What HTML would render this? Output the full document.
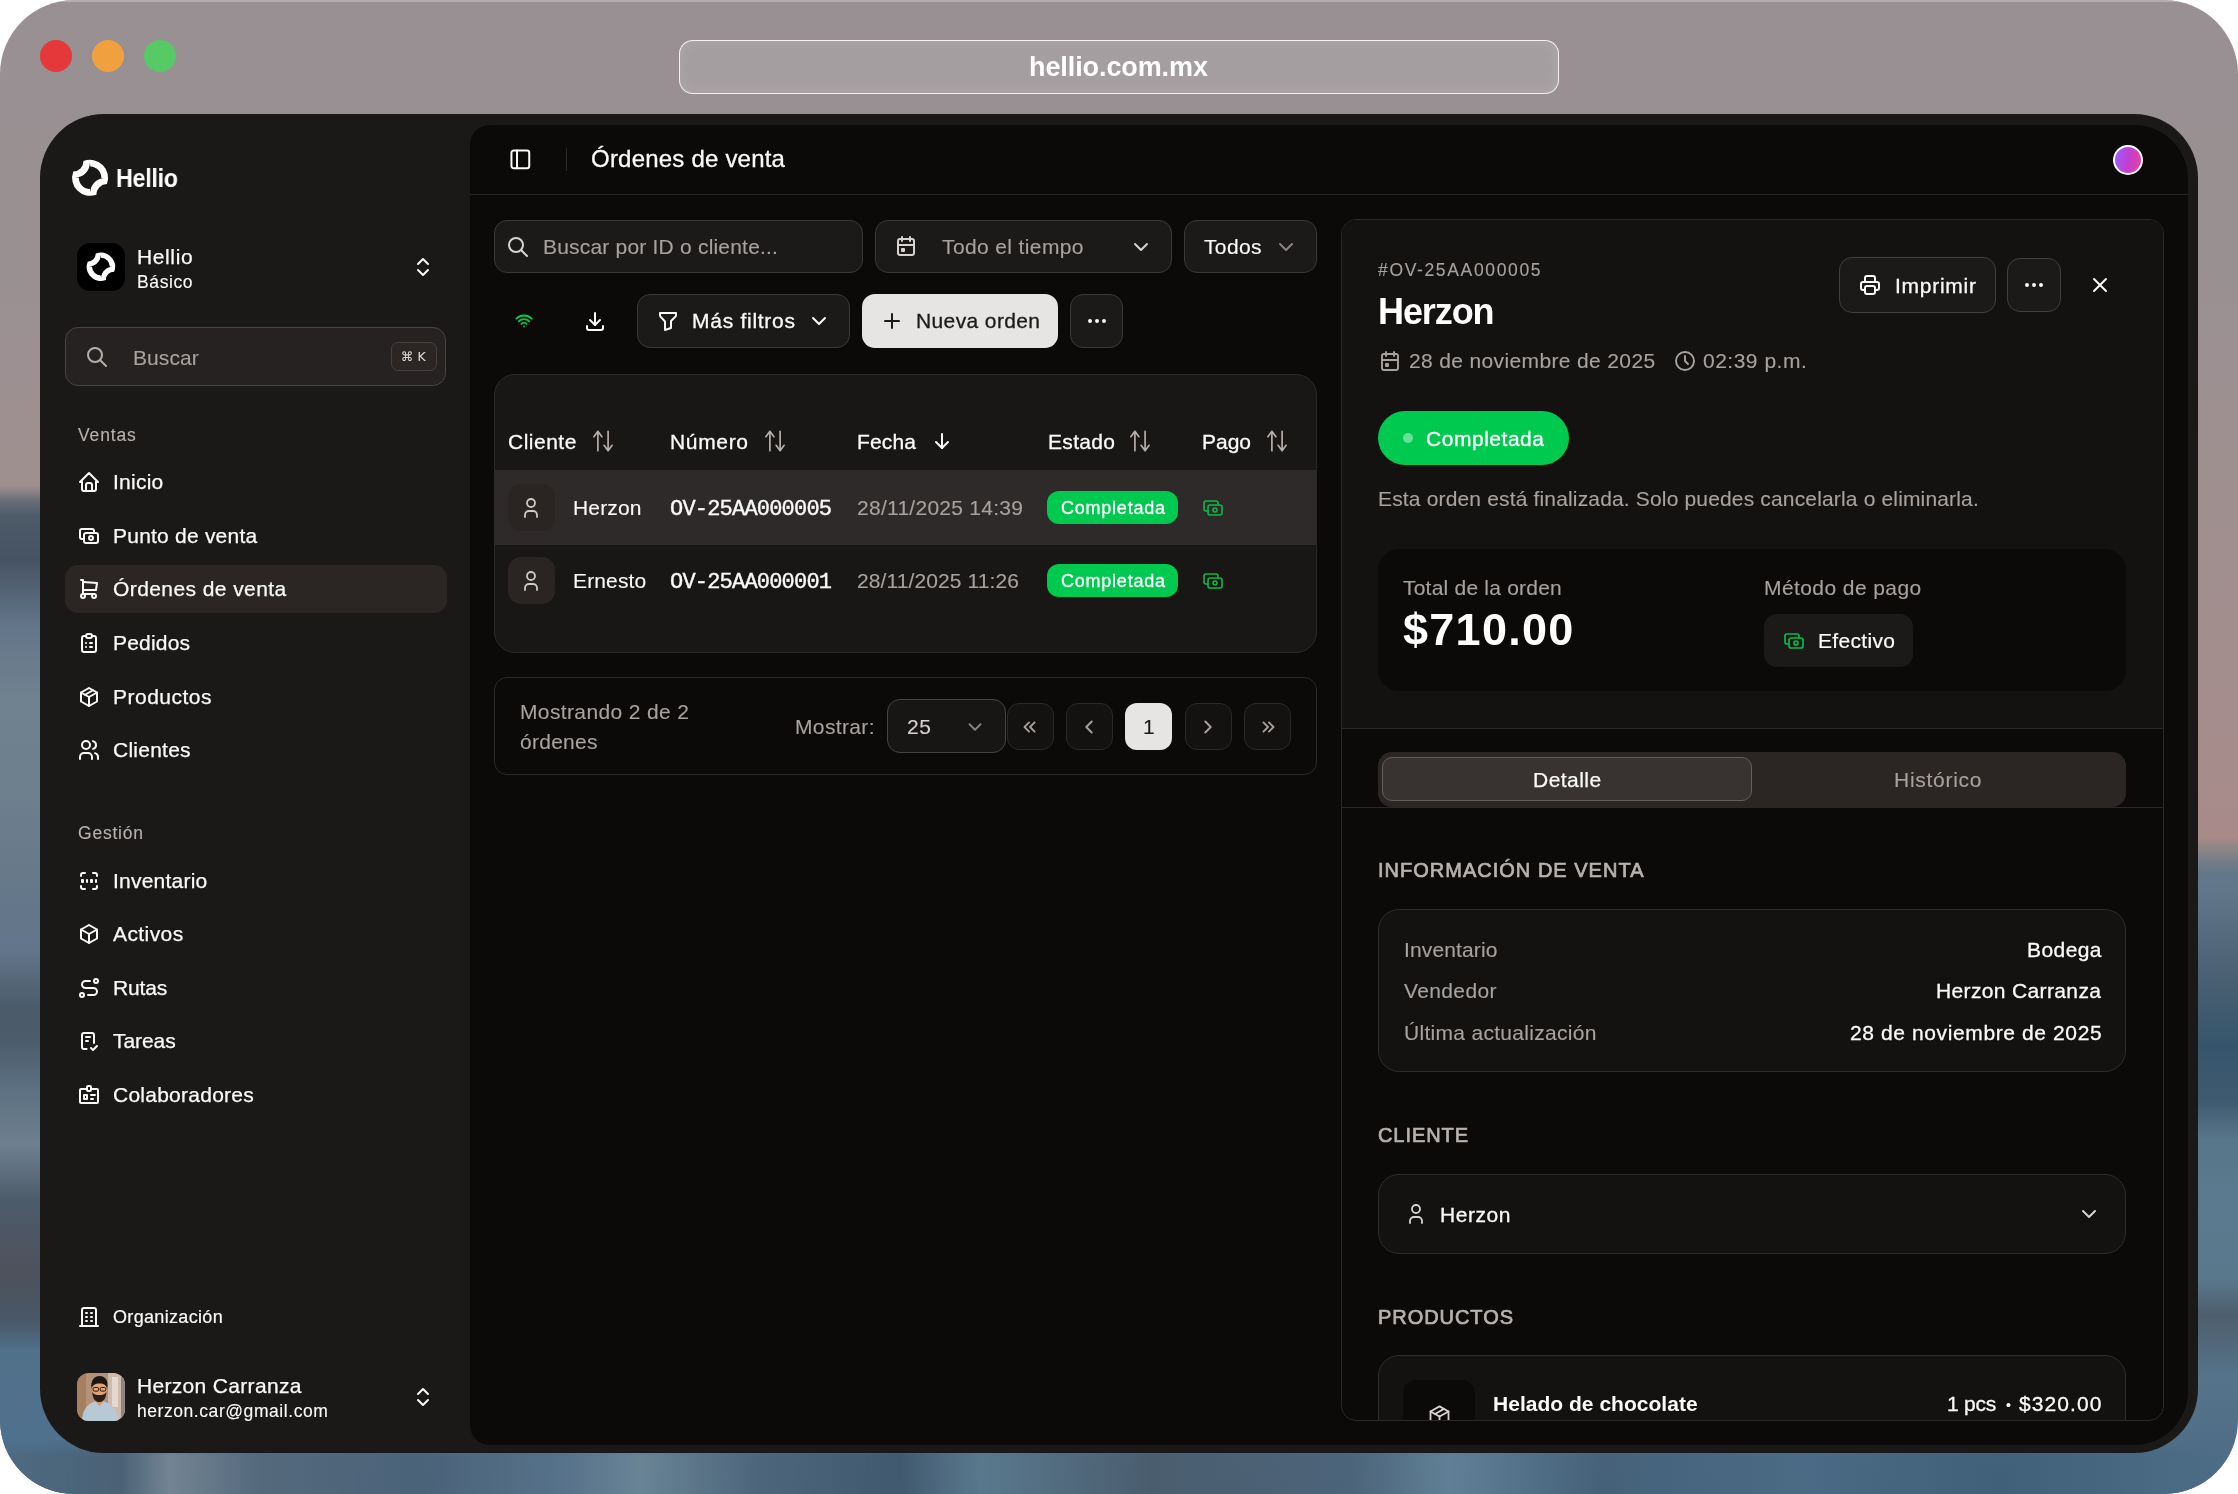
<!DOCTYPE html>
<html lang="es"><head><meta charset="utf-8"><title>Hellio - Órdenes de venta</title><style>
*{box-sizing:border-box;margin:0;padding:0}
html,body{width:2238px;height:1494px;background:#fff;overflow:hidden}
body{font-family:"Liberation Sans",sans-serif;position:relative}
.b{position:absolute;display:block}
.t{position:absolute;white-space:nowrap;will-change:transform}
</style></head><body>
<div class="b" style="left:0;top:0;width:2238px;height:1494px;border-radius:74px;overflow:hidden;background:linear-gradient(180deg,#989092 0px,#9a9092 300px,#a08f8f 520px,#a68c8b 780px,#a88a88 838px,#8a8486 850px,#64788a 872px,#5f7587 900px,#4b6073 975px,#36556c 1045px,#3f5a70 1100px,#587689 1140px,#5b7a8f 1200px,#5a788c 1280px,#4e5e6c 1315px,#56738a 1375px,#4a6b84 1494px)">
<div class="b" style="left:0;top:0;width:1100px;height:1494px;background:linear-gradient(180deg,rgba(0,0,0,0) 486px,#6b6f78 500px,#4d5b69 516px,#465362 560px,#63758a 625px,#70828f 700px,#6d7f8d 800px,#66798a 880px,#62758a 950px,#4a5a69 1010px,#4c5c6b 1040px,#5b6f80 1085px,#6e8090 1145px,#4d5b6a 1200px,#4e525c 1270px,#495766 1320px,#51708a 1350px,#4f7290 1494px);-webkit-mask-image:linear-gradient(90deg,#000 0,#000 60px,rgba(0,0,0,0) 1100px);mask-image:linear-gradient(90deg,#000 0,#000 60px,rgba(0,0,0,0) 1100px)"></div>
<div class="b" style="left:0;top:1440px;width:2238px;height:54px;background:linear-gradient(90deg,#4e6a80 0,#4a5f72 120px,#7a8896 170px,#55687a 260px,#4a6176 420px,#58728a 560px,#6f8899 640px,#4d6479 760px,#3f566b 900px,#5d7b8f 980px,#4a5b6c 1150px,#4c6378 1350px,#65849a 1450px,#456078 1600px,#4a6a85 1800px,#3f5e78 2000px,#4f6f88 2238px);opacity:.85;-webkit-mask-image:linear-gradient(180deg,rgba(0,0,0,0) 0,#000 16px);mask-image:linear-gradient(180deg,rgba(0,0,0,0) 0,#000 16px)"></div>
<div class="b" style="left:0;top:0;width:2238px;height:2px;background:rgba(255,255,255,.25)"></div>
</div>
<div class="b" style="left:40px;top:40px;width:32px;height:32px;background:#e5383b;border-radius:16px;"></div>
<div class="b" style="left:92px;top:40px;width:32px;height:32px;background:#f0a03f;border-radius:16px;"></div>
<div class="b" style="left:144px;top:40px;width:32px;height:32px;background:#57c965;border-radius:16px;"></div>
<div class="b" style="left:679px;top:40px;width:880px;height:54px;background:rgba(255,255,255,.13);border-radius:14px;border:1.5px solid rgba(255,255,255,.85);box-shadow:inset 0 0 12px rgba(255,255,255,.12)"></div>
<div class="t" style="font-size:27px;line-height:38px;top:47.5px;color:#fff;left:1029.0px;letter-spacing:-0.09px;font-weight:700;">hellio.com.mx</div>
<div class="b" style="left:40px;top:114px;width:2158px;height:1339px;background:#1b1918;border-radius:64px;"></div>
<div class="b" style="left:470px;top:124.5px;width:1718px;height:1320px;background:#0c0a09;border-radius:20px 54px 54px 20px"></div>
<svg class="b" style="left:66.0px;top:154.0px" width="48" height="48" viewBox="0 0 48 48"><path fill="#fff" fill-rule="evenodd" d="M17.49 7.11A18 18 0 0 1 40.98 30.11A10.4 10.4 0 0 0 30.44 40.7A18 18 0 0 1 7.27 17.48A10.4 10.4 0 0 0 17.49 7.11ZM23.94 8.35L24.4 12.4A11.3 11.3 0 0 1 35.34 23.94L39.5 23.94A15 15 0 0 0 24.25 38.55L23.94 35A11.3 11.3 0 0 1 12.85 23.78L8.67 23.6A15 15 0 0 0 23.94 8.35Z"/></svg>
<div class="t" style="font-size:26.5px;line-height:37px;top:159.5px;color:#fff;left:116.0px;letter-spacing:-0.34px;font-weight:700;transform:scaleX(0.88);transform-origin:0 50%;">Hellio</div>
<div class="b" style="left:77px;top:243px;width:48px;height:48px;background:#000;border-radius:13px;"></div>
<svg class="b" style="left:82.2px;top:248.2px" width="37.7" height="37.7" viewBox="0 0 48 48"><path fill="#fff" fill-rule="evenodd" d="M17.49 7.11A18 18 0 0 1 40.98 30.11A10.4 10.4 0 0 0 30.44 40.7A18 18 0 0 1 7.27 17.48A10.4 10.4 0 0 0 17.49 7.11ZM23.94 8.35L24.4 12.4A11.3 11.3 0 0 1 35.34 23.94L39.5 23.94A15 15 0 0 0 24.25 38.55L23.94 35A11.3 11.3 0 0 1 12.85 23.78L8.67 23.6A15 15 0 0 0 23.94 8.35Z"/></svg>
<div class="t" style="font-size:21px;line-height:29px;top:241.5px;color:#fafaf9;left:137.0px;letter-spacing:0.62px;-webkit-text-stroke:0.25px #fafaf9;">Hellio</div>
<div class="t" style="font-size:17.5px;line-height:24px;top:269.5px;color:#fafaf9;left:137.0px;letter-spacing:0.61px;-webkit-text-stroke:0.12px #fafaf9;">Básico</div>
<svg class="b" style="left:410.5px;top:255.0px" width="24" height="24" viewBox="0 0 24 24" fill="none" stroke="#fafaf9" stroke-width="2" stroke-linecap="round" stroke-linejoin="round"><path d="M7 15l5 5l5 -5"/><path d="M7 9l5 -5l5 5"/></svg>
<div class="b" style="left:65px;top:327px;width:381px;height:59px;background:#252221;border:1px solid #494442;border-radius:13px;"></div>
<svg class="b" style="left:84.5px;top:345.0px" width="24" height="24" viewBox="0 0 24 24" fill="none" stroke="#b5afab" stroke-width="2" stroke-linecap="round" stroke-linejoin="round"><path d="M10 10m-7 0a7 7 0 1 0 14 0a7 7 0 1 0 -14 0"/><path d="M21 21l-6 -6"/></svg>
<div class="t" style="font-size:21px;line-height:29px;top:342.5px;color:#a8a29e;left:132.8px;letter-spacing:0.09px;-webkit-text-stroke:0.12px #a8a29e;">Buscar</div>
<div class="b" style="left:391px;top:342px;width:46px;height:29px;background:#2b2624;border:1px solid #45403d;border-radius:7px;"></div>
<div class="t" style="font-size:12.5px;line-height:18px;top:347.5px;color:#d6d3d1;left:401.2px;-webkit-text-stroke:0.12px #d6d3d1;font-family:'DejaVu Sans','Liberation Sans',sans-serif;">⌘ K</div>
<div class="t" style="font-size:17.5px;line-height:24px;top:422.5px;color:#b8b2ae;left:78.0px;letter-spacing:0.86px;-webkit-text-stroke:0.12px #b8b2ae;">Ventas</div>
<div class="b" style="left:65px;top:565px;width:381.5px;height:48px;background:#2b2624;border-radius:13px;"></div>
<svg class="b" style="left:77.0px;top:469.5px" width="24" height="24" viewBox="0 0 24 24" fill="none" stroke="#fafaf9" stroke-width="2" stroke-linecap="round" stroke-linejoin="round"><path d="M5 12l-2 0l9 -9l9 9l-2 0"/><path d="M5 12v7a2 2 0 0 0 2 2h10a2 2 0 0 0 2 -2v-7"/><path d="M9 21v-6a2 2 0 0 1 2 -2h2a2 2 0 0 1 2 2v6"/></svg>
<div class="t" style="font-size:21px;line-height:29px;top:466.5px;color:#fafaf9;left:113.0px;letter-spacing:0.24px;-webkit-text-stroke:0.25px #fafaf9;">Inicio</div>
<svg class="b" style="left:77.0px;top:523.5px" width="24" height="24" viewBox="0 0 24 24" fill="none" stroke="#fafaf9" stroke-width="2" stroke-linecap="round" stroke-linejoin="round"><path d="M7 9m0 2a2 2 0 0 1 2 -2h10a2 2 0 0 1 2 2v6a2 2 0 0 1 -2 2h-10a2 2 0 0 1 -2 -2z"/><path d="M14 14m-2 0a2 2 0 1 0 4 0a2 2 0 1 0 -4 0"/><path d="M17 9v-2a2 2 0 0 0 -2 -2h-10a2 2 0 0 0 -2 2v6a2 2 0 0 0 2 2h2"/></svg>
<div class="t" style="font-size:21px;line-height:29px;top:520.5px;color:#fafaf9;left:113.0px;letter-spacing:0.22px;-webkit-text-stroke:0.25px #fafaf9;">Punto de venta</div>
<svg class="b" style="left:77.0px;top:577.1px" width="24" height="24" viewBox="0 0 24 24" fill="none" stroke="#fafaf9" stroke-width="2" stroke-linecap="round" stroke-linejoin="round"><path d="M6 19m-2 0a2 2 0 1 0 4 0a2 2 0 1 0 -4 0"/><path d="M17 19m-2 0a2 2 0 1 0 4 0a2 2 0 1 0 -4 0"/><path d="M17 17h-11v-14h-2"/><path d="M6 5l14 1l-1 7h-13"/></svg>
<div class="t" style="font-size:21px;line-height:29px;top:574.1px;color:#fafaf9;left:113.0px;letter-spacing:0.42px;-webkit-text-stroke:0.25px #fafaf9;">Órdenes de venta</div>
<svg class="b" style="left:77.0px;top:630.5px" width="24" height="24" viewBox="0 0 24 24" fill="none" stroke="#fafaf9" stroke-width="2" stroke-linecap="round" stroke-linejoin="round"><path d="M9 5h-2a2 2 0 0 0 -2 2v12a2 2 0 0 0 2 2h10a2 2 0 0 0 2 -2v-12a2 2 0 0 0 -2 -2h-2"/><path d="M9 3m0 2a2 2 0 0 1 2 -2h2a2 2 0 0 1 2 2v0a2 2 0 0 1 -2 2h-2a2 2 0 0 1 -2 -2z"/><path d="M9 12l.01 0"/><path d="M13 12l2 0"/><path d="M9 16l.01 0"/><path d="M13 16l2 0"/></svg>
<div class="t" style="font-size:21px;line-height:29px;top:627.5px;color:#fafaf9;left:113.0px;letter-spacing:0.19px;-webkit-text-stroke:0.25px #fafaf9;">Pedidos</div>
<svg class="b" style="left:77.0px;top:684.5px" width="24" height="24" viewBox="0 0 24 24" fill="none" stroke="#fafaf9" stroke-width="2" stroke-linecap="round" stroke-linejoin="round"><path d="M12 3l8 4.5l0 9l-8 4.5l-8 -4.5l0 -9l8 -4.5"/><path d="M12 12l8 -4.5"/><path d="M12 12l0 9"/><path d="M12 12l-8 -4.5"/><path d="M16 5.25l-8 4.5"/></svg>
<div class="t" style="font-size:21px;line-height:29px;top:681.5px;color:#fafaf9;left:113.0px;letter-spacing:0.49px;-webkit-text-stroke:0.25px #fafaf9;">Productos</div>
<svg class="b" style="left:77.0px;top:738.0px" width="24" height="24" viewBox="0 0 24 24" fill="none" stroke="#fafaf9" stroke-width="2" stroke-linecap="round" stroke-linejoin="round"><path d="M9 7m-4 0a4 4 0 1 0 8 0a4 4 0 1 0 -8 0"/><path d="M3 21v-2a4 4 0 0 1 4 -4h4a4 4 0 0 1 4 4v2"/><path d="M16 3.13a4 4 0 0 1 0 7.75"/><path d="M21 21v-2a4 4 0 0 0 -3 -3.85"/></svg>
<div class="t" style="font-size:21px;line-height:29px;top:735.0px;color:#fafaf9;left:113.0px;letter-spacing:0.25px;-webkit-text-stroke:0.25px #fafaf9;">Clientes</div>
<div class="t" style="font-size:17.5px;line-height:24px;top:821.3px;color:#b8b2ae;left:78.0px;letter-spacing:0.78px;-webkit-text-stroke:0.12px #b8b2ae;">Gestión</div>
<svg class="b" style="left:77.0px;top:869.0px" width="24" height="24" viewBox="0 0 24 24" fill="none" stroke="#fafaf9" stroke-width="2" stroke-linecap="round" stroke-linejoin="round"><path d="M4 7v-1a2 2 0 0 1 2 -2h2"/><path d="M4 17v1a2 2 0 0 0 2 2h2"/><path d="M16 4h2a2 2 0 0 1 2 2v1"/><path d="M16 20h2a2 2 0 0 0 2 -2v-1"/><path d="M5 11h1v2h-1z"/><path d="M10 11l0 2"/><path d="M14 11h1v2h-1z"/><path d="M19 11l0 2"/></svg>
<div class="t" style="font-size:21px;line-height:29px;top:865.5px;color:#fafaf9;left:113.0px;letter-spacing:0.23px;-webkit-text-stroke:0.25px #fafaf9;">Inventario</div>
<svg class="b" style="left:77.0px;top:922.3px" width="24" height="24" viewBox="0 0 24 24" fill="none" stroke="#fafaf9" stroke-width="2" stroke-linecap="round" stroke-linejoin="round"><path d="M12 3l8 4.5l0 9l-8 4.5l-8 -4.5l0 -9l8 -4.5"/><path d="M12 12l8 -4.5"/><path d="M12 12l0 9"/><path d="M12 12l-8 -4.5"/></svg>
<div class="t" style="font-size:21px;line-height:29px;top:918.8px;color:#fafaf9;left:113.0px;letter-spacing:0.42px;-webkit-text-stroke:0.25px #fafaf9;">Activos</div>
<svg class="b" style="left:77.0px;top:976.0px" width="24" height="24" viewBox="0 0 24 24" fill="none" stroke="#fafaf9" stroke-width="2" stroke-linecap="round" stroke-linejoin="round"><path d="M3 19a2 2 0 1 0 4 0a2 2 0 0 0 -4 0"/><path d="M19 7a2 2 0 1 0 0 -4a2 2 0 0 0 0 4z"/><path d="M11 19h5.5a3.5 3.5 0 0 0 0 -7h-8a3.5 3.5 0 0 1 0 -7h4.5"/></svg>
<div class="t" style="font-size:21px;line-height:29px;top:972.5px;color:#fafaf9;left:113.0px;letter-spacing:-0.16px;-webkit-text-stroke:0.25px #fafaf9;">Rutas</div>
<svg class="b" style="left:77.0px;top:1029.4px" width="24" height="24" viewBox="0 0 24 24" fill="none" stroke="#fafaf9" stroke-width="2" stroke-linecap="round" stroke-linejoin="round"><path d="M9.615 20h-2.615a2 2 0 0 1 -2 -2v-12a2 2 0 0 1 2 -2h8a2 2 0 0 1 2 2v8"/><path d="M14 19l2 2l4 -4"/><path d="M9 8h4"/><path d="M9 12h2"/></svg>
<div class="t" style="font-size:21px;line-height:29px;top:1025.9px;color:#fafaf9;left:113.0px;letter-spacing:-0.07px;-webkit-text-stroke:0.25px #fafaf9;">Tareas</div>
<svg class="b" style="left:77.0px;top:1083.0px" width="24" height="24" viewBox="0 0 24 24" fill="none" stroke="#fafaf9" stroke-width="2" stroke-linecap="round" stroke-linejoin="round"><path d="M7 12h3v4h-3z"/><path d="M10 6h-6a1 1 0 0 0 -1 1v12a1 1 0 0 0 1 1h16a1 1 0 0 0 1 -1v-12a1 1 0 0 0 -1 -1h-6"/><path d="M10 3m0 1a1 1 0 0 1 1 -1h2a1 1 0 0 1 1 1v3a1 1 0 0 1 -1 1h-2a1 1 0 0 1 -1 -1z"/><path d="M14 16h2"/><path d="M14 12h4"/></svg>
<div class="t" style="font-size:21px;line-height:29px;top:1079.5px;color:#fafaf9;left:113.0px;letter-spacing:0.25px;-webkit-text-stroke:0.25px #fafaf9;">Colaboradores</div>
<svg class="b" style="left:77.0px;top:1305.0px" width="24" height="24" viewBox="0 0 24 24" fill="none" stroke="#fafaf9" stroke-width="2" stroke-linecap="round" stroke-linejoin="round"><path d="M3 21l18 0"/><path d="M9 8l1 0"/><path d="M9 12l1 0"/><path d="M9 16l1 0"/><path d="M14 8l1 0"/><path d="M14 12l1 0"/><path d="M14 16l1 0"/><path d="M5 21v-16a2 2 0 0 1 2 -2h10a2 2 0 0 1 2 2v16"/></svg>
<div class="t" style="font-size:18px;line-height:25px;top:1304.5px;color:#fafaf9;left:113.3px;letter-spacing:0.33px;-webkit-text-stroke:0.2px #fafaf9;">Organización</div>
<svg class="b" style="left:77px;top:1373px;border-radius:12px" width="48" height="48" viewBox="0 0 48 48"><rect width="48" height="48" fill="#b4927a"/><rect x="0" y="0" width="9" height="48" fill="#a5815f"/><rect x="31" y="0" width="17" height="48" fill="#cdbcae"/><rect x="35" y="4" width="6" height="30" fill="#e4d9cf"/><rect x="44" y="0" width="4" height="48" fill="#8f8480"/><path d="M5 48c0-12 7-20 17.500-20s18.500 8 18.500 20z" fill="#b7c9d6"/><path d="M18 28l4.500 5l4.500-5z" fill="#d9966a"/><ellipse cx="22.300" cy="16.500" rx="7.300" ry="9.500" fill="#e3a26f"/><path d="M14.600 15.500c-1.500-8 3-12.500 8-12.500s9.500 4 7.500 12.500c-1-3.500-3-5-7.500-5s-7 1.500-8 5z" fill="#1e1815"/><path d="M15.200 19c.5 7.500 3.500 10 7.100 10s6.600-2.500 7.100-10c-1.500 2.500-4 3-7.100 3s-5.600-.5-7.100-3z" fill="#2a1f1a"/><rect x="16" y="14.500" width="5.600" height="3.600" rx="1.300" fill="none" stroke="#1e1815" stroke-width="1"/><rect x="23.200" y="14.500" width="5.600" height="3.600" rx="1.300" fill="none" stroke="#1e1815" stroke-width="1"/></svg>
<div class="t" style="font-size:21px;line-height:29px;top:1371.1px;color:#fafaf9;left:137.2px;letter-spacing:0.32px;-webkit-text-stroke:0.25px #fafaf9;">Herzon Carranza</div>
<div class="t" style="font-size:17.5px;line-height:24px;top:1398.5px;color:#fafaf9;left:137.2px;letter-spacing:0.56px;-webkit-text-stroke:0.12px #fafaf9;">herzon.car@gmail.com</div>
<svg class="b" style="left:410.5px;top:1385.0px" width="24" height="24" viewBox="0 0 24 24" fill="none" stroke="#fafaf9" stroke-width="2" stroke-linecap="round" stroke-linejoin="round"><path d="M7 15l5 5l5 -5"/><path d="M7 9l5 -5l5 5"/></svg>
<div class="b" style="left:470px;top:194px;width:1718px;height:1px;background:#262321;"></div>
<svg class="b" style="left:507.2px;top:145.8px" width="26.7" height="26.7" viewBox="0 0 24 24" fill="none" stroke="#fafaf9" stroke-width="1.8" stroke-linecap="round" stroke-linejoin="round"><path d="M4 4m0 2a2 2 0 0 1 2 -2h12a2 2 0 0 1 2 2v12a2 2 0 0 1 -2 2h-12a2 2 0 0 1 -2 -2z"/><path d="M9 4l0 16"/></svg>
<div class="b" style="left:565.5px;top:148px;width:1px;height:23px;background:#2c2927;"></div>
<div class="t" style="font-size:24px;line-height:34px;top:142.0px;color:#fafaf9;left:591.0px;letter-spacing:0.21px;-webkit-text-stroke:0.3px #fafaf9;">Órdenes de venta</div>
<div class="b" style="left:2112.5px;top:144.5px;width:30px;height:30px;border-radius:15px;background:linear-gradient(100deg,#a855f7 15%,#c13fd0 50%,#ec3f9a 100%);border:2px solid #fff"></div>
<div class="b" style="left:494px;top:220px;width:369px;height:53px;background:#1c1a19;border:1px solid #3d3836;border-radius:13px;"></div>
<svg class="b" style="left:506.0px;top:234.5px" width="24" height="24" viewBox="0 0 24 24" fill="none" stroke="#d6d3d1" stroke-width="2" stroke-linecap="round" stroke-linejoin="round"><path d="M10 10m-7 0a7 7 0 1 0 14 0a7 7 0 1 0 -14 0"/><path d="M21 21l-6 -6"/></svg>
<div class="t" style="font-size:21px;line-height:29px;top:232.0px;color:#a8a29e;left:543.0px;letter-spacing:0.20px;-webkit-text-stroke:0.12px #a8a29e;">Buscar por ID o cliente...</div>
<div class="b" style="left:875px;top:220px;width:297px;height:53px;background:#1c1a19;border:1px solid #3d3836;border-radius:13px;"></div>
<svg class="b" style="left:894.0px;top:234.0px" width="24" height="24" viewBox="0 0 24 24" fill="none" stroke="#d6d3d1" stroke-width="2" stroke-linecap="round" stroke-linejoin="round"><path d="M4 5m0 2a2 2 0 0 1 2 -2h12a2 2 0 0 1 2 2v12a2 2 0 0 1 -2 2h-12a2 2 0 0 1 -2 -2z"/><path d="M16 3l0 4"/><path d="M8 3l0 4"/><path d="M4 11l16 0"/><path d="M8 15h2v2h-2z"/></svg>
<div class="t" style="font-size:21px;line-height:29px;top:231.5px;color:#a8a29e;left:942.0px;letter-spacing:0.38px;-webkit-text-stroke:0.12px #a8a29e;">Todo el tiempo</div>
<svg class="b" style="left:1129.0px;top:234.5px" width="24" height="24" viewBox="0 0 24 24" fill="none" stroke="#d6d3d1" stroke-width="2" stroke-linecap="round" stroke-linejoin="round"><path d="M6 9l6 6l6 -6"/></svg>
<div class="b" style="left:1184px;top:220px;width:133px;height:53px;background:#1c1a19;border:1px solid #3d3836;border-radius:13px;"></div>
<div class="t" style="font-size:21px;line-height:29px;top:231.5px;color:#fafaf9;left:1204.0px;letter-spacing:0.37px;-webkit-text-stroke:0.15px #fafaf9;">Todos</div>
<svg class="b" style="left:1273.5px;top:234.5px" width="24" height="24" viewBox="0 0 24 24" fill="none" stroke="#8a8480" stroke-width="2" stroke-linecap="round" stroke-linejoin="round"><path d="M6 9l6 6l6 -6"/></svg>
<svg class="b" style="left:512.5px;top:309.5px" width="22" height="22" viewBox="0 0 24 24" fill="none" stroke="#00c950" stroke-width="2" stroke-linecap="round" stroke-linejoin="round"><path d="M12 18l.01 0"/><path d="M9.172 15.172a4 4 0 0 1 5.656 0"/><path d="M6.343 12.343a8 8 0 0 1 11.314 0"/><path d="M3.515 9.515c4.686 -4.687 12.284 -4.687 17 0"/></svg>
<svg class="b" style="left:583.0px;top:308.5px" width="24" height="24" viewBox="0 0 24 24" fill="none" stroke="#fafaf9" stroke-width="2" stroke-linecap="round" stroke-linejoin="round"><path d="M4 17v2a2 2 0 0 0 2 2h12a2 2 0 0 0 2 -2v-2"/><path d="M7 11l5 5l5 -5"/><path d="M12 4l0 12"/></svg>
<div class="b" style="left:637px;top:294px;width:213px;height:54px;background:#1c1a19;border:1px solid #3d3836;border-radius:13px;"></div>
<svg class="b" style="left:656.0px;top:309.0px" width="24" height="24" viewBox="0 0 24 24" fill="none" stroke="#fafaf9" stroke-width="2" stroke-linecap="round" stroke-linejoin="round"><path d="M4 4h16v2.172a2 2 0 0 1 -.586 1.414l-4.414 4.414v7l-6 2v-8.5l-4.48 -4.928a2 2 0 0 1 -.52 -1.345v-2.227z"/></svg>
<div class="t" style="font-size:21px;line-height:29px;top:306.0px;color:#fafaf9;left:692.0px;letter-spacing:0.73px;-webkit-text-stroke:0.3px #fafaf9;">Más filtros</div>
<svg class="b" style="left:807.0px;top:309.0px" width="24" height="24" viewBox="0 0 24 24" fill="none" stroke="#fafaf9" stroke-width="2" stroke-linecap="round" stroke-linejoin="round"><path d="M6 9l6 6l6 -6"/></svg>
<div class="b" style="left:862px;top:294px;width:196px;height:54px;background:#e7e5e4;border-radius:13px;"></div>
<svg class="b" style="left:880.0px;top:309.0px" width="24" height="24" viewBox="0 0 24 24" fill="none" stroke="#1c1917" stroke-width="2" stroke-linecap="round" stroke-linejoin="round"><path d="M12 5l0 14"/><path d="M5 12l14 0"/></svg>
<div class="t" style="font-size:21px;line-height:29px;top:306.0px;color:#1c1917;left:916.0px;letter-spacing:0.38px;-webkit-text-stroke:0.3px #1c1917;">Nueva orden</div>
<div class="b" style="left:1070px;top:294px;width:53px;height:54px;background:#1c1a19;border:1px solid #3d3836;border-radius:13px;"></div>
<svg class="b" style="left:1084.5px;top:309.0px" width="24" height="24" viewBox="0 0 24 24" fill="none" stroke="#fafaf9" stroke-width="2" stroke-linecap="round" stroke-linejoin="round"><path d="M5 12m-1 0a1 1 0 1 0 2 0a1 1 0 1 0 -2 0"/><path d="M12 12m-1 0a1 1 0 1 0 2 0a1 1 0 1 0 -2 0"/><path d="M19 12m-1 0a1 1 0 1 0 2 0a1 1 0 1 0 -2 0"/></svg>
<div class="b" style="left:494px;top:374px;width:823px;height:279px;background:#191716;border:1px solid #2c2927;border-radius:21px;overflow:hidden">
<div class="b" style="left:-1px;top:95px;width:823px;height:1px;background:#2e2a28;"></div>
<div class="b" style="left:-1px;top:96px;width:823px;height:73px;background:#2e2a29;"></div>
<div class="b" style="left:-1px;top:169px;width:823px;height:1px;background:#2e2a28;"></div>
</div>
<div class="t" style="font-size:21px;line-height:29px;top:426.5px;color:#fafaf9;left:507.7px;letter-spacing:0.49px;-webkit-text-stroke:0.3px #fafaf9;">Cliente</div>
<svg class="b" style="left:590.8px;top:429.3px" width="24" height="24" viewBox="0 0 24 24" fill="none" stroke="#b5aeaa" stroke-width="1.7" stroke-linecap="round" stroke-linejoin="round"><path d="M2.9 7.7L6.9 2.3L10.9 7.7M6.9 2.3V21.7"/><path d="M13.1 16.3L17.1 21.7L21.1 16.3M17.1 21.7V2.3"/></svg>
<div class="t" style="font-size:21px;line-height:29px;top:426.5px;color:#fafaf9;left:670.0px;letter-spacing:0.66px;-webkit-text-stroke:0.3px #fafaf9;">Número</div>
<svg class="b" style="left:762.8px;top:429.3px" width="24" height="24" viewBox="0 0 24 24" fill="none" stroke="#b5aeaa" stroke-width="1.7" stroke-linecap="round" stroke-linejoin="round"><path d="M2.9 7.7L6.9 2.3L10.9 7.7M6.9 2.3V21.7"/><path d="M13.1 16.3L17.1 21.7L21.1 16.3M17.1 21.7V2.3"/></svg>
<div class="t" style="font-size:21px;line-height:29px;top:426.5px;color:#fafaf9;left:857.0px;letter-spacing:0.16px;-webkit-text-stroke:0.3px #fafaf9;">Fecha</div>
<svg class="b" style="left:929.8px;top:429.3px" width="24" height="24" viewBox="0 0 24 24" fill="none" stroke="#fafaf9" stroke-width="2" stroke-linecap="round" stroke-linejoin="round"><path d="M12 5l0 14"/><path d="M18 13l-6 6"/><path d="M6 13l6 6"/></svg>
<div class="t" style="font-size:21px;line-height:29px;top:426.5px;color:#fafaf9;left:1047.5px;letter-spacing:0.32px;-webkit-text-stroke:0.3px #fafaf9;">Estado</div>
<svg class="b" style="left:1128.3px;top:429.3px" width="24" height="24" viewBox="0 0 24 24" fill="none" stroke="#b5aeaa" stroke-width="1.7" stroke-linecap="round" stroke-linejoin="round"><path d="M2.9 7.7L6.9 2.3L10.9 7.7M6.9 2.3V21.7"/><path d="M13.1 16.3L17.1 21.7L21.1 16.3M17.1 21.7V2.3"/></svg>
<div class="t" style="font-size:21px;line-height:29px;top:426.5px;color:#fafaf9;left:1202.0px;letter-spacing:-0.01px;-webkit-text-stroke:0.3px #fafaf9;">Pago</div>
<svg class="b" style="left:1265.3px;top:429.3px" width="24" height="24" viewBox="0 0 24 24" fill="none" stroke="#b5aeaa" stroke-width="1.7" stroke-linecap="round" stroke-linejoin="round"><path d="M2.9 7.7L6.9 2.3L10.9 7.7M6.9 2.3V21.7"/><path d="M13.1 16.3L17.1 21.7L21.1 16.3M17.1 21.7V2.3"/></svg>
<div class="b" style="left:507.5px;top:484px;width:47.5px;height:47px;background:#2a2523;border-radius:13px;"></div>
<svg class="b" style="left:519.2px;top:495.5px" width="24" height="24" viewBox="0 0 24 24" fill="none" stroke="#cfc9c5" stroke-width="1.8" stroke-linecap="round" stroke-linejoin="round"><path d="M8 7a4 4 0 1 0 8 0a4 4 0 0 0 -8 0"/><path d="M6 21v-2a4 4 0 0 1 4 -4h4a4 4 0 0 1 4 4v2"/></svg>
<div class="t" style="font-size:21px;line-height:29px;top:492.8px;color:#fafaf9;left:573.3px;letter-spacing:0.16px;-webkit-text-stroke:0.12px #fafaf9;">Herzon</div>
<div class="t" style="font-size:22px;line-height:31px;top:493.8px;color:#fafaf9;left:670.0px;letter-spacing:-0.80px;font-family:'Liberation Mono',monospace;-webkit-text-stroke:0.4px #fafaf9;">OV-25AA000005</div>
<div class="t" style="font-size:21px;line-height:29px;top:492.8px;color:#a8a29e;left:857.0px;letter-spacing:0.27px;-webkit-text-stroke:0.12px #a8a29e;">28/11/2025 14:39</div>
<div class="b" style="left:1047px;top:491px;width:131px;height:33px;background:#00c950;border-radius:12px;"></div>
<div class="t" style="font-size:18px;line-height:25px;top:495.5px;color:#fff;left:1060.5px;letter-spacing:0.77px;-webkit-text-stroke:0.3px #fff;">Completada</div>
<svg class="b" style="left:1201.3px;top:495.7px" width="24" height="24" viewBox="0 0 24 24" fill="none" stroke="#08b94c" stroke-width="1.6" stroke-linecap="round" stroke-linejoin="round"><path d="M7 9m0 2a2 2 0 0 1 2 -2h10a2 2 0 0 1 2 2v6a2 2 0 0 1 -2 2h-10a2 2 0 0 1 -2 -2z"/><path d="M14 14m-2 0a2 2 0 1 0 4 0a2 2 0 1 0 -4 0"/><path d="M17 9v-2a2 2 0 0 0 -2 -2h-10a2 2 0 0 0 -2 2v6a2 2 0 0 0 2 2h2"/></svg>
<div class="b" style="left:507.5px;top:557px;width:47.5px;height:47px;background:#2a2523;border-radius:13px;"></div>
<svg class="b" style="left:519.2px;top:568.5px" width="24" height="24" viewBox="0 0 24 24" fill="none" stroke="#cfc9c5" stroke-width="1.8" stroke-linecap="round" stroke-linejoin="round"><path d="M8 7a4 4 0 1 0 8 0a4 4 0 0 0 -8 0"/><path d="M6 21v-2a4 4 0 0 1 4 -4h4a4 4 0 0 1 4 4v2"/></svg>
<div class="t" style="font-size:21px;line-height:29px;top:565.8px;color:#fafaf9;left:573.3px;letter-spacing:0.14px;-webkit-text-stroke:0.12px #fafaf9;">Ernesto</div>
<div class="t" style="font-size:22px;line-height:31px;top:566.8px;color:#fafaf9;left:670.0px;letter-spacing:-0.80px;font-family:'Liberation Mono',monospace;-webkit-text-stroke:0.4px #fafaf9;">OV-25AA000001</div>
<div class="t" style="font-size:21px;line-height:29px;top:565.8px;color:#a8a29e;left:857.0px;letter-spacing:0.11px;-webkit-text-stroke:0.12px #a8a29e;">28/11/2025 11:26</div>
<div class="b" style="left:1047px;top:564px;width:131px;height:33px;background:#00c950;border-radius:12px;"></div>
<div class="t" style="font-size:18px;line-height:25px;top:568.5px;color:#fff;left:1060.5px;letter-spacing:0.77px;-webkit-text-stroke:0.3px #fff;">Completada</div>
<svg class="b" style="left:1201.3px;top:568.7px" width="24" height="24" viewBox="0 0 24 24" fill="none" stroke="#08b94c" stroke-width="1.6" stroke-linecap="round" stroke-linejoin="round"><path d="M7 9m0 2a2 2 0 0 1 2 -2h10a2 2 0 0 1 2 2v6a2 2 0 0 1 -2 2h-10a2 2 0 0 1 -2 -2z"/><path d="M14 14m-2 0a2 2 0 1 0 4 0a2 2 0 1 0 -4 0"/><path d="M17 9v-2a2 2 0 0 0 -2 -2h-10a2 2 0 0 0 -2 2v6a2 2 0 0 0 2 2h2"/></svg>
<div class="b" style="left:494px;top:677px;width:823px;height:98px;background:#0c0a09;border:1px solid #2c2826;border-radius:13px;"></div>
<div class="t" style="font-size:21px;line-height:29px;top:697.0px;color:#a8a29e;left:519.5px;letter-spacing:0.37px;-webkit-text-stroke:0.12px #a8a29e;">Mostrando 2 de 2</div>
<div class="t" style="font-size:21px;line-height:29px;top:727.0px;color:#a8a29e;left:519.5px;letter-spacing:0.27px;-webkit-text-stroke:0.12px #a8a29e;">órdenes</div>
<div class="t" style="font-size:21px;line-height:29px;top:712.0px;color:#a8a29e;left:794.5px;letter-spacing:0.36px;-webkit-text-stroke:0.12px #a8a29e;">Mostrar:</div>
<div class="b" style="left:887px;top:699px;width:119px;height:54px;background:#181615;border:1px solid #4a4441;border-radius:13px;"></div>
<div class="t" style="font-size:21px;line-height:29px;top:712.0px;color:#d6d3d1;left:907.0px;letter-spacing:0.64px;-webkit-text-stroke:0.12px #d6d3d1;">25</div>
<svg class="b" style="left:963.5px;top:715.5px" width="22" height="22" viewBox="0 0 24 24" fill="none" stroke="#8a8480" stroke-width="2" stroke-linecap="round" stroke-linejoin="round"><path d="M6 9l6 6l6 -6"/></svg>
<div class="b" style="left:1006.5px;top:703px;width:47px;height:47px;background:#141211;border:1px solid #2c2826;border-radius:12px;"></div>
<svg class="b" style="left:1019.0px;top:715.5px" width="22" height="22" viewBox="0 0 24 24" fill="none" stroke="#a8a29e" stroke-width="2" stroke-linecap="round" stroke-linejoin="round"><path d="M11 7l-5 5l5 5"/><path d="M17 7l-5 5l5 5"/></svg>
<div class="b" style="left:1065.7px;top:703px;width:47px;height:47px;background:#141211;border:1px solid #2c2826;border-radius:12px;"></div>
<svg class="b" style="left:1078.2px;top:715.5px" width="22" height="22" viewBox="0 0 24 24" fill="none" stroke="#a8a29e" stroke-width="2" stroke-linecap="round" stroke-linejoin="round"><path d="M15 6l-6 6l6 6"/></svg>
<div class="b" style="left:1184.8px;top:703px;width:47px;height:47px;background:#141211;border:1px solid #2c2826;border-radius:12px;"></div>
<svg class="b" style="left:1197.3px;top:715.5px" width="22" height="22" viewBox="0 0 24 24" fill="none" stroke="#a8a29e" stroke-width="2" stroke-linecap="round" stroke-linejoin="round"><path d="M9 6l6 6l-6 6"/></svg>
<div class="b" style="left:1244.4px;top:703px;width:47px;height:47px;background:#141211;border:1px solid #2c2826;border-radius:12px;"></div>
<svg class="b" style="left:1256.9px;top:715.5px" width="22" height="22" viewBox="0 0 24 24" fill="none" stroke="#a8a29e" stroke-width="2" stroke-linecap="round" stroke-linejoin="round"><path d="M7 7l5 5l-5 5"/><path d="M13 7l5 5l-5 5"/></svg>
<div class="b" style="left:1125.3px;top:703px;width:47px;height:47px;background:#e7e5e4;border-radius:12px;"></div>
<div class="t" style="font-size:21px;line-height:29px;top:712.0px;color:#1c1917;left:1143.0px;-webkit-text-stroke:0.12px #1c1917;">1</div>
<div class="b" style="left:1341px;top:219px;width:823px;height:1202px;background:#0c0a09;border:1px solid #2c2826;border-radius:15px;overflow:hidden">
<div class="b" style="left:-1px;top:-1px;width:823px;height:509px;background:#141211;"></div>
<div class="b" style="left:-1px;top:507.5px;width:823px;height:1px;background:#2a2725;"></div>
<div class="b" style="left:-1px;top:586.5px;width:823px;height:1px;background:#2a2725;"></div>
<div class="t" style="font-size:17.5px;line-height:24px;top:38.0px;color:#a8a29e;left:36.0px;letter-spacing:1.65px;-webkit-text-stroke:0.12px #a8a29e;">#OV-25AA000005</div>
<div class="t" style="font-size:36px;line-height:50px;top:67.0px;color:#fff;left:36.0px;letter-spacing:-1.10px;font-weight:700;">Herzon</div>
<svg class="b" style="left:35.5px;top:129.0px" width="24" height="24" viewBox="0 0 24 24" fill="none" stroke="#a8a29e" stroke-width="1.9" stroke-linecap="round" stroke-linejoin="round"><path d="M4 5m0 2a2 2 0 0 1 2 -2h12a2 2 0 0 1 2 2v12a2 2 0 0 1 -2 2h-12a2 2 0 0 1 -2 -2z"/><path d="M16 3l0 4"/><path d="M8 3l0 4"/><path d="M4 11l16 0"/><path d="M8 15h2v2h-2z"/></svg>
<div class="t" style="font-size:21px;line-height:29px;top:126.0px;color:#a8a29e;left:66.5px;letter-spacing:0.36px;-webkit-text-stroke:0.12px #a8a29e;">28 de noviembre de 2025</div>
<svg class="b" style="left:331.3px;top:129.0px" width="24" height="24" viewBox="0 0 24 24" fill="none" stroke="#a8a29e" stroke-width="1.9" stroke-linecap="round" stroke-linejoin="round"><path d="M3 12a9 9 0 1 0 18 0a9 9 0 0 0 -18 0"/><path d="M12 7v5l3 3"/></svg>
<div class="t" style="font-size:21px;line-height:29px;top:126.0px;color:#a8a29e;left:361.3px;letter-spacing:0.50px;-webkit-text-stroke:0.12px #a8a29e;">02:39 p.m.</div>
<div class="b" style="left:497px;top:37px;width:157px;height:56px;background:#1c1a19;border:1px solid #443f3d;border-radius:13px;"></div>
<svg class="b" style="left:516.3px;top:53.0px" width="24" height="24" viewBox="0 0 24 24" fill="none" stroke="#fafaf9" stroke-width="2" stroke-linecap="round" stroke-linejoin="round"><path d="M17 17h2a2 2 0 0 0 2 -2v-4a2 2 0 0 0 -2 -2h-14a2 2 0 0 0 -2 2v4a2 2 0 0 0 2 2h2"/><path d="M17 9v-4a2 2 0 0 0 -2 -2h-6a2 2 0 0 0 -2 2v4"/><path d="M7 13m0 2a2 2 0 0 1 2 -2h6a2 2 0 0 1 2 2v4a2 2 0 0 1 -2 2h-6a2 2 0 0 1 -2 -2z"/></svg>
<div class="t" style="font-size:21px;line-height:29px;top:50.5px;color:#fafaf9;left:553.0px;letter-spacing:0.74px;-webkit-text-stroke:0.3px #fafaf9;">Imprimir</div>
<div class="b" style="left:665px;top:38px;width:54px;height:54px;background:#1c1a19;border:1px solid #443f3d;border-radius:13px;"></div>
<svg class="b" style="left:680.3px;top:53.0px" width="24" height="24" viewBox="0 0 24 24" fill="none" stroke="#fafaf9" stroke-width="2" stroke-linecap="round" stroke-linejoin="round"><path d="M5 12m-1 0a1 1 0 1 0 2 0a1 1 0 1 0 -2 0"/><path d="M12 12m-1 0a1 1 0 1 0 2 0a1 1 0 1 0 -2 0"/><path d="M19 12m-1 0a1 1 0 1 0 2 0a1 1 0 1 0 -2 0"/></svg>
<svg class="b" style="left:745.8px;top:53.0px" width="24" height="24" viewBox="0 0 24 24" fill="none" stroke="#fafaf9" stroke-width="2" stroke-linecap="round" stroke-linejoin="round"><path d="M18 6l-12 12"/><path d="M6 6l12 12"/></svg>
<div class="b" style="left:36px;top:191px;width:190.7px;height:54px;background:#00c950;border-radius:27px;"></div>
<div class="b" style="left:60.799999999999955px;top:213.3px;width:10px;height:10px;background:#66e293;border-radius:5px;"></div>
<div class="t" style="font-size:21px;line-height:29px;top:204.0px;color:#fff;left:84.0px;letter-spacing:0.53px;-webkit-text-stroke:0.3px #fff;">Completada</div>
<div class="t" style="font-size:21px;line-height:29px;top:264.0px;color:#a8a29e;left:36.0px;letter-spacing:0.16px;-webkit-text-stroke:0.12px #a8a29e;">Esta orden está finalizada. Solo puedes cancelarla o eliminarla.</div>
<div class="b" style="left:36px;top:328.5px;width:748px;height:142.5px;background:#0c0a09;border-radius:21px;"></div>
<div class="t" style="font-size:21px;line-height:29px;top:353.0px;color:#a8a29e;left:60.7px;letter-spacing:0.22px;-webkit-text-stroke:0.12px #a8a29e;">Total de la orden</div>
<div class="t" style="font-size:45px;line-height:63px;top:378.0px;color:#fff;left:60.7px;letter-spacing:1.27px;font-weight:700;">$710.00</div>
<div class="t" style="font-size:21px;line-height:29px;top:353.0px;color:#a8a29e;left:422.3px;letter-spacing:0.42px;-webkit-text-stroke:0.12px #a8a29e;">Método de pago</div>
<div class="b" style="left:422px;top:394px;width:149px;height:53px;background:#1c1a19;border-radius:13px;"></div>
<svg class="b" style="left:440.0px;top:408.5px" width="24" height="24" viewBox="0 0 24 24" fill="none" stroke="#08b94c" stroke-width="1.7" stroke-linecap="round" stroke-linejoin="round"><path d="M7 9m0 2a2 2 0 0 1 2 -2h10a2 2 0 0 1 2 2v6a2 2 0 0 1 -2 2h-10a2 2 0 0 1 -2 -2z"/><path d="M14 14m-2 0a2 2 0 1 0 4 0a2 2 0 1 0 -4 0"/><path d="M17 9v-2a2 2 0 0 0 -2 -2h-10a2 2 0 0 0 -2 2v6a2 2 0 0 0 2 2h2"/></svg>
<div class="t" style="font-size:21px;line-height:29px;top:405.8px;color:#fafaf9;left:476.0px;letter-spacing:0.33px;-webkit-text-stroke:0.2px #fafaf9;">Efectivo</div>
<div class="b" style="left:36px;top:532px;width:748px;height:55px;background:#2b2624;border-radius:14px;"></div>
<div class="b" style="left:40px;top:537px;width:370px;height:44px;background:#383331;border:1px solid #66605d;border-radius:10px;"></div>
<div class="t" style="font-size:21px;line-height:29px;top:544.5px;color:#fafaf9;left:191.3px;letter-spacing:0.47px;-webkit-text-stroke:0.25px #fafaf9;">Detalle</div>
<div class="t" style="font-size:21px;line-height:29px;top:544.5px;color:#a8a29e;left:551.8px;letter-spacing:0.73px;-webkit-text-stroke:0.12px #a8a29e;">Histórico</div>
<div class="t" style="font-size:20px;line-height:28px;top:636.0px;color:#b8b2ae;left:36.0px;letter-spacing:1.01px;-webkit-text-stroke:0.7px #b8b2ae;">INFORMACIÓN DE VENTA</div>
<div class="b" style="left:36px;top:689px;width:748px;height:163px;background:#141211;border:1px solid #302c2a;border-radius:21px;"></div>
<div class="t" style="font-size:21px;line-height:29px;top:714.5px;color:#a8a29e;left:62.0px;letter-spacing:0.14px;-webkit-text-stroke:0.12px #a8a29e;">Inventario</div>
<div class="t" style="font-size:21px;line-height:29px;top:714.5px;color:#fafaf9;left:684.5px;letter-spacing:0.42px;-webkit-text-stroke:0.3px #fafaf9;">Bodega</div>
<div class="t" style="font-size:21px;line-height:29px;top:756.1px;color:#a8a29e;left:62.0px;letter-spacing:0.37px;-webkit-text-stroke:0.12px #a8a29e;">Vendedor</div>
<div class="t" style="font-size:21px;line-height:29px;top:756.1px;color:#fafaf9;left:594.0px;letter-spacing:0.36px;-webkit-text-stroke:0.3px #fafaf9;">Herzon Carranza</div>
<div class="t" style="font-size:21px;line-height:29px;top:797.5px;color:#a8a29e;left:62.0px;letter-spacing:0.30px;-webkit-text-stroke:0.12px #a8a29e;">Última actualización</div>
<div class="t" style="font-size:21px;line-height:29px;top:797.5px;color:#fafaf9;left:507.5px;letter-spacing:0.61px;-webkit-text-stroke:0.3px #fafaf9;">28 de noviembre de 2025</div>
<div class="t" style="font-size:20px;line-height:28px;top:901.0px;color:#b8b2ae;left:36.0px;letter-spacing:0.92px;-webkit-text-stroke:0.7px #b8b2ae;">CLIENTE</div>
<div class="b" style="left:36px;top:954px;width:748px;height:80px;background:#141211;border:1px solid #302c2a;border-radius:21px;"></div>
<svg class="b" style="left:61.5px;top:981.8px" width="24" height="24" viewBox="0 0 24 24" fill="none" stroke="#d6d3d1" stroke-width="1.8" stroke-linecap="round" stroke-linejoin="round"><path d="M8 7a4 4 0 1 0 8 0a4 4 0 0 0 -8 0"/><path d="M6 21v-2a4 4 0 0 1 4 -4h4a4 4 0 0 1 4 4v2"/></svg>
<div class="t" style="font-size:21px;line-height:29px;top:979.5px;color:#fafaf9;left:97.6px;letter-spacing:0.54px;-webkit-text-stroke:0.3px #fafaf9;">Herzon</div>
<svg class="b" style="left:735.0px;top:982.0px" width="24" height="24" viewBox="0 0 24 24" fill="none" stroke="#d6d3d1" stroke-width="2" stroke-linecap="round" stroke-linejoin="round"><path d="M6 9l6 6l6 -6"/></svg>
<div class="t" style="font-size:20px;line-height:28px;top:1083.0px;color:#b8b2ae;left:36.0px;letter-spacing:0.95px;-webkit-text-stroke:0.7px #b8b2ae;">PRODUCTOS</div>
<div class="b" style="left:36px;top:1135px;width:748px;height:120px;background:#141211;border:1px solid #302c2a;border-radius:21px;"></div>
<div class="b" style="left:61px;top:1160px;width:72px;height:72px;background:#0c0a09;border-radius:13px;"></div>
<svg class="b" style="left:83.5px;top:1182.5px" width="27" height="27" viewBox="0 0 24 24" fill="none" stroke="#d6d3d1" stroke-width="1.6" stroke-linecap="round" stroke-linejoin="round"><path d="M12 3l8 4.5l0 9l-8 4.5l-8 -4.5l0 -9l8 -4.5"/><path d="M12 12l8 -4.5"/><path d="M12 12l0 9"/><path d="M12 12l-8 -4.5"/><path d="M16 5.25l-8 4.5"/></svg>
<div class="t" style="font-size:21px;line-height:29px;top:1169.3px;color:#fafaf9;left:151.0px;letter-spacing:0.02px;font-weight:700;">Helado de chocolate</div>
<div class="t" style="font-size:21px;line-height:29px;top:1169.3px;color:#fafaf9;left:605.3px;letter-spacing:-0.22px;-webkit-text-stroke:0.3px #fafaf9;">1 pcs</div>
<div class="t" style="font-size:14px;line-height:20px;top:1174.5px;color:#fafaf9;left:663.5px;-webkit-text-stroke:0.12px #fafaf9;">•</div>
<div class="t" style="font-size:21px;line-height:29px;top:1169.3px;color:#fafaf9;left:676.6px;letter-spacing:1.08px;-webkit-text-stroke:0.3px #fafaf9;">$320.00</div>
</div>
</body></html>
